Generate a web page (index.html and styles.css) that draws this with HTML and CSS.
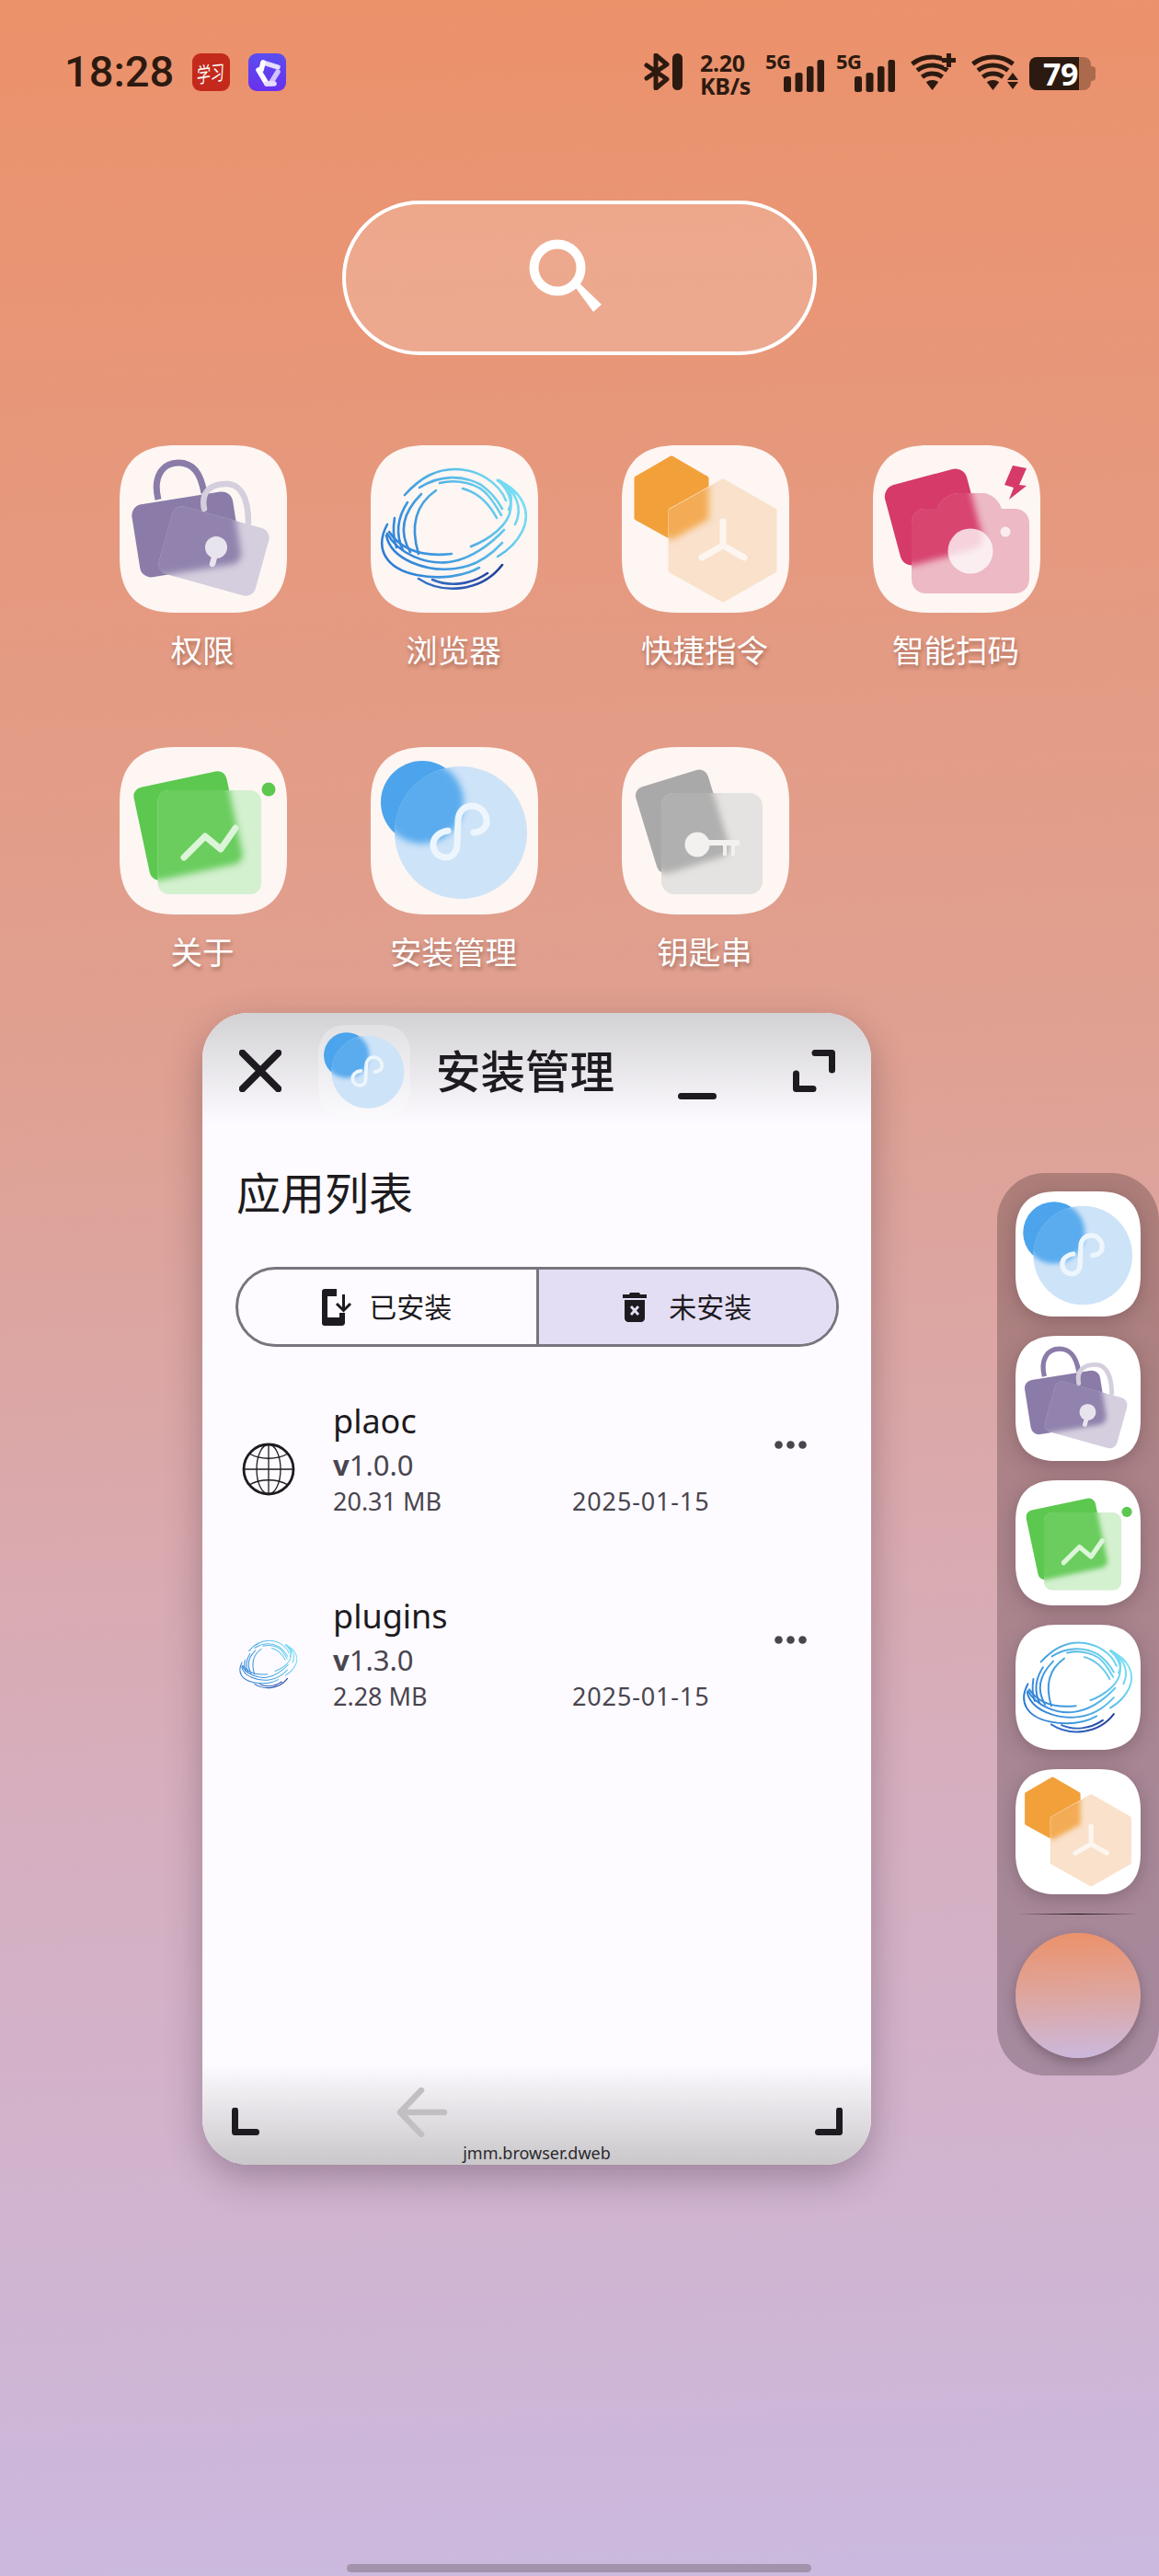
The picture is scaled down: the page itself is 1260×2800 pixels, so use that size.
FILE: index.html
```html
<!DOCTYPE html>
<html lang="zh-CN">
<head>
<meta charset="utf-8">
<title>安装管理</title>
<link rel="stylesheet" href="styles.css">
</head>
<body>
<svg class="defs" aria-hidden="true">
  <defs>
    <filter id="glass" x="-30%" y="-30%" width="160%" height="160%"><feGaussianBlur stdDeviation="3.6"/></filter>
    <linearGradient id="swirl" gradientUnits="userSpaceOnUse" x1="20" y1="130" x2="160" y2="50">
      <stop offset="0" stop-color="#2b7ad6"/><stop offset=".55" stop-color="#4fb0e4"/><stop offset="1" stop-color="#78e0f4"/>
    </linearGradient>
    <linearGradient id="navy" gradientUnits="userSpaceOnUse" x1="50" y1="150" x2="145" y2="135">
      <stop offset="0" stop-color="#3a78cc"/><stop offset="1" stop-color="#203c9c"/>
    </linearGradient>
    <path id="tile" d="M60 0H122C162 0 182 20 182 60V122C182 162 162 182 122 182H60C20 182 0 162 0 122V60C0 20 20 0 60 0Z"/>

    <rect id="lock-back" x="17" y="57" width="111" height="80" rx="12" transform="rotate(-9 72 96)"/>
    <rect id="lock-front" x="48" y="77" width="109" height="76" rx="11" transform="rotate(15.5 102.5 115)"/>
    <clipPath id="clip-lock"><use href="#lock-front"/></clipPath>

    <path id="hex-back" d="M54 14L92 36V79L54 100L16 79V36Z" stroke-width="5" stroke-linejoin="round"/>
    <path id="hex-front" d="M110 39L166 71V136L110 168L53 136V71Z" stroke-width="5" stroke-linejoin="round"/>
    <clipPath id="clip-hex"><path d="M110 37L168 70V137L110 170L51 137V70Z"/></clipPath>

    <rect id="cam-back" x="20" y="33" width="92" height="90" rx="13" transform="rotate(-15 66 78)"/>
    <path id="cam-front" d="M56 69H70C74 58 84 52 94 52H119C129 52 137 60 140 69H154C164 69 170 76 170 85V145C170 155 163 161 154 161H58C49 161 42 155 42 145V85C42 76 48 69 56 69Z"/>
    <clipPath id="clip-cam"><use href="#cam-front"/></clipPath>

    <rect id="ab-back" x="23" y="34" width="103" height="103" rx="10" transform="rotate(-12 74 85)"/>
    <rect id="ab-front" x="41.500" y="47" width="112.500" height="113" rx="12"/>
    <clipPath id="clip-ab"><use href="#ab-front"/></clipPath>

    <circle id="jm-back" cx="56" cy="60" r="45"/>
    <circle id="jm-front" cx="98" cy="93" r="72"/>
    <clipPath id="clip-jm"><use href="#jm-front"/></clipPath>

    <rect id="key-back" x="25" y="32" width="82" height="98" rx="10" transform="rotate(-17 66 81)"/>
    <rect id="key-front" x="43" y="50" width="110" height="110" rx="14"/>
    <clipPath id="clip-key"><use href="#key-front"/></clipPath>

    <g id="swirl-lines" fill="none" stroke="url(#swirl)" stroke-width="2.600" stroke-linecap="round">
      <path d="M71 49Q38 72 52 118"/>
      <path d="M55 53Q24 84 43 116"/>
      <path d="M40 62Q23 88 35 114"/>
      <path d="M26 79Q23 97 28 111"/>
      <path d="M18 86C4 112 16 134 50 141C75 146 100 143 118 133"/>
      <path d="M17 98C22 124 60 138 92 134C112 132 130 120 143 106"/>
      <path d="M18 96C30 118 60 130 85 127C108 124 130 108 145 92"/>
      <path d="M20 94C32 112 52 122 88 118"/>
      <path d="M37 54C55 34 72 26 92 26C118 26 140 42 147 60"/>
      <path d="M53 46C75 32 100 32 120 43C130 50 138 60 143 69"/>
      <path d="M75 41C95 36 118 42 128 55C134 62 138 69 142 76"/>
      <path d="M100 47C115 51 128 62 137 79"/>
      <path d="M138 38C165 50 175 72 165 93C159 105 150 114 138 121"/>
      <path d="M138 38C158 48 166 68 157 86"/>
      <path d="M140 38C152 46 156 58 150 70"/>
      <path d="M109 110C130 102 150 86 152 70C154 58 148 46 138 38"/>
      <path d="M52 145C78 162 120 160 143 130" stroke="url(#navy)"/>
      <path d="M67 146C85 154 108 152 127 139" stroke="url(#navy)"/>
    </g>

    <symbol id="i-lock" viewBox="0 0 182 182">
      <use href="#tile" class="tile-bg"/>
      <path d="M42 59C36 35 46 19 64 19C80 19 88 30 92 52" fill="none" stroke="#8a7ba8" stroke-width="7"/>
      <use href="#lock-back" fill="#8a7ba8"/>
      <use href="#lock-front" fill="#d5cede"/>
      <g clip-path="url(#clip-lock)">
        <g filter="url(#glass)" opacity=".9"><use href="#lock-back" fill="#8a7ba8"/></g>
      </g>
      <path d="M92 69C88 50 100 41 118 42C132 43 140 58 140 84" fill="none" stroke="#d4cedd" stroke-width="6.500" stroke-linecap="round"/>
      <circle cx="105" cy="111" r="12" fill="#e8e4ee"/>
      <path d="M104 118L101 129" stroke="#e8e4ee" stroke-width="6.500" stroke-linecap="round"/>
    </symbol>

    <symbol id="i-swirl" viewBox="0 0 182 182">
      <use href="#tile" class="tile-bg"/>
      <use href="#swirl-lines"/>
    </symbol>
    <symbol id="i-swirl-bare" viewBox="0 0 182 182">
      <use href="#swirl-lines"/>
    </symbol>

    <symbol id="i-hex" viewBox="0 0 182 182">
      <use href="#tile" class="tile-bg"/>
      <use href="#hex-back" fill="#f2a03a" stroke="#f2a03a"/>
      <use href="#hex-front" fill="#f9e1cb" stroke="#f9e1cb"/>
      <g clip-path="url(#clip-hex)">
        <g filter="url(#glass)" opacity=".82"><use href="#hex-back" fill="#f2a03a" stroke="#f2a03a"/></g>
      </g>
      <path d="M110 83V109M110 109L87 122M110 109L133 122" fill="none" stroke="#fdf6f0" stroke-width="7" stroke-linecap="round"/>
    </symbol>

    <symbol id="i-cam" viewBox="0 0 182 182">
      <use href="#tile" class="tile-bg"/>
      <path d="M152 22L167 25L159 43L167 44L148 59L153 46L143 43Z" fill="#d63a68"/>
      <use href="#cam-back" fill="#d63a68"/>
      <use href="#cam-front" fill="#ecb9c5"/>
      <g clip-path="url(#clip-cam)">
        <g filter="url(#glass)" opacity=".92"><use href="#cam-back" fill="#d63a68"/></g>
      </g>
      <circle cx="106" cy="115" r="24.500" fill="#fff" fill-opacity=".76"/>
      <circle cx="144" cy="94" r="5.500" fill="#fff" fill-opacity=".75"/>
    </symbol>

    <symbol id="i-about" viewBox="0 0 182 182">
      <use href="#tile" class="tile-bg"/>
      <circle cx="162" cy="46" r="7.500" fill="#5cc84f"/>
      <use href="#ab-back" fill="#5cc84f"/>
      <use href="#ab-front" fill="#d3f0cf"/>
      <g clip-path="url(#clip-ab)">
        <g filter="url(#glass)" opacity=".88"><use href="#ab-back" fill="#5cc84f"/></g>
      </g>
      <path d="M70 120L93 97L110 111L126 88" fill="none" stroke="#dcf5d8" stroke-width="7" stroke-linecap="round" stroke-linejoin="round"/>
    </symbol>

    <symbol id="i-jmm" viewBox="0 0 182 182">
      <use href="#tile" class="tile-bg"/>
      <use href="#jm-back" fill="#4ba4ec"/>
      <use href="#jm-front" fill="#cde3f8"/>
      <g clip-path="url(#clip-jm)">
        <g filter="url(#glass)" opacity=".88"><use href="#jm-back" fill="#4ba4ec"/></g>
      </g>
      <path d="M112 93C122 92 127 86 126 79C125 70 118 64 110 64C101 64 95 71 95 80L94 105C94 114 89 120 82 120C74 120 68 114 68 106C68 98 75 92 84 91" fill="none" stroke="#eef6fd" stroke-width="7" stroke-linecap="round"/>
    </symbol>

    <symbol id="i-key" viewBox="0 0 182 182">
      <use href="#tile" class="tile-bg"/>
      <use href="#key-back" fill="#a9a9a9"/>
      <use href="#key-front" fill="#e5e3e1"/>
      <g clip-path="url(#clip-key)">
        <g filter="url(#glass)" opacity=".88"><use href="#key-back" fill="#a9a9a9"/></g>
      </g>
      <circle cx="82" cy="106" r="13.500" fill="#f3f1ef"/>
      <path d="M90 101H128V107H123V118H119V107H114V118H110V107H90Z" fill="#f3f1ef"/>
    </symbol>
  </defs>
</svg>

<div class="screen">
  <header class="status">
    <div class="status-left">
      <span class="time">18:28</span>
      <span class="badge badge-red"><span class="badge-text">学习</span></span>
      <span class="badge badge-purple">
        <svg viewBox="0 0 41 41" width="41" height="41"><g fill="none" stroke-width="5.500" stroke-linecap="round"><path d="M16 10L32 15" stroke="#e6ddff"/><path d="M11 18L20 33" stroke="#fff"/><path d="M32 20L24 33" stroke="#cfc2ff"/><path d="M16 10L14 18" stroke="#fff"/><path d="M20 33L28 33" stroke="#e6ddff"/></g></svg>
      </span>
    </div>
    <div class="status-right">
      <svg class="st-bt" viewBox="0 0 42 40" width="42" height="40"><path d="M3 13L25 28L13 38V2L25 12L3 27" fill="none" stroke="#2c1a10" stroke-width="5" stroke-linejoin="round" stroke-linecap="round"/><rect x="31" y="0" width="11" height="40" rx="5.500" fill="#2c1a10"/></svg>
      <div class="speed"><span>2.20</span><span>KB/s</span></div>
      <div class="signal">
        <span class="five-g">5G</span>
        <svg viewBox="0 0 44 35" width="44" height="35"><rect x="0" y="18" width="8" height="17" rx="2.500"/><rect x="12.500" y="14" width="8" height="21" rx="2.500"/><rect x="25" y="7" width="7.500" height="28" rx="2.500"/><rect x="36.500" y="0" width="7.500" height="35" rx="2.500"/></svg>
      </div>
      <div class="signal">
        <span class="five-g">5G</span>
        <svg viewBox="0 0 44 35" width="44" height="35"><rect x="0" y="18" width="8" height="17" rx="2.500"/><rect x="12.500" y="14" width="8" height="21" rx="2.500"/><rect x="25" y="7" width="7.500" height="28" rx="2.500"/><rect x="36.500" y="0" width="7.500" height="35" rx="2.500"/></svg>
      </div>
      <svg class="wifi" viewBox="0 0 50 40" width="50" height="40">
        <g fill="none" stroke="#2c1a10" stroke-width="5"><path d="M1.600 11.500A36 36 0 0 1 45.400 11.500"/><path d="M7.100 18.600A27 27 0 0 1 39.900 18.600"/><path d="M12.500 25.700A18 18 0 0 1 34.500 25.700"/></g>
        <path d="M23.500 40L16.800 31.300A11 11 0 0 1 30.200 31.300Z" fill="#2c1a10"/>
        <path d="M41.500 0V15M34 7.500H49" stroke="#ec9169" stroke-width="10"/>
        <path d="M41.500 0V15M34 7.500H49" stroke="#2c1a10" stroke-width="5"/>
      </svg>
      <svg class="wifi" viewBox="0 0 51 40" width="51" height="40">
        <g fill="none" stroke="#2c1a10" stroke-width="5"><path d="M1.600 11.500A36 36 0 0 1 45.400 11.500"/><path d="M7.100 18.600A27 27 0 0 1 39.900 18.600"/><path d="M12.500 25.700A18 18 0 0 1 34.500 25.700"/></g>
        <path d="M23.500 40L16.800 31.300A11 11 0 0 1 30.200 31.300Z" fill="#2c1a10"/>
        <path d="M45 21L51 29H39ZM45 39L39 31H51Z" fill="#2c1a10"/>
      </svg>
      <div class="battery"><span>79</span></div>
    </div>
  </header>

  <div class="search">
    <svg viewBox="0 0 90 90" width="90" height="90"><circle cx="33" cy="33" r="25.500" fill="none" stroke="#fff" stroke-width="10"/><path d="M50 51L55 48L81 73L72 81Z" fill="#fff"/></svg>
  </div>

  <main class="apps">
    <div class="app"><svg class="tile"><use href="#i-lock"/></svg><span class="app-name">权限</span></div>
    <div class="app"><svg class="tile"><use href="#i-swirl"/></svg><span class="app-name">浏览器</span></div>
    <div class="app"><svg class="tile"><use href="#i-hex"/></svg><span class="app-name">快捷指令</span></div>
    <div class="app"><svg class="tile"><use href="#i-cam"/></svg><span class="app-name">智能扫码</span></div>
    <div class="app"><svg class="tile"><use href="#i-about"/></svg><span class="app-name">关于</span></div>
    <div class="app"><svg class="tile"><use href="#i-jmm"/></svg><span class="app-name">安装管理</span></div>
    <div class="app"><svg class="tile"><use href="#i-key"/></svg><span class="app-name">钥匙串</span></div>
  </main>

  <section class="window">
    <div class="win-head">
      <svg class="w-close" viewBox="0 0 46 46" width="46" height="46"><path d="M3.500 3.500L42.500 42.500M42.500 3.500L3.500 42.500" stroke="#1d1b20" stroke-width="7.500" stroke-linecap="round"/></svg>
      <svg class="w-icon"><use href="#i-jmm"/></svg>
      <span class="w-title">安装管理</span>
      <svg class="w-min" viewBox="0 0 42 63" width="42" height="63"><rect x="0" y="56" width="42" height="7" rx="3.500" fill="#1d1b20"/></svg>
      <svg class="w-max" viewBox="0 0 46 46" width="46" height="46"><path d="M24 3.500H42.500V22M3.500 26V42.500H22" fill="none" stroke="#1d1b20" stroke-width="7" stroke-linecap="round" stroke-linejoin="round"/></svg>
    </div>
    <div class="win-body">
      <h1 class="page-title">应用列表</h1>
      <div class="segments">
        <div class="segment">
          <svg viewBox="0 0 33 40" width="33" height="40"><path d="M3 0H16V8H6V31H19V26H25V37C25 39 23 40 22 40H3C1 40 0 39 0 37V3C0 1 1 0 3 0Z" fill="#1d1b20"/><path d="M23.500 6V23M16 16L23.500 23.500L31 16" fill="none" stroke="#1d1b20" stroke-width="3"/></svg>
          <span class="segment-label">已安装</span>
        </div>
        <div class="segment segment-on">
          <svg viewBox="0 0 26 32" width="26" height="32"><path d="M8 0H18L19 2H26V6H0V2H7ZM2 8H24V28C24 30 22 32 20 32H6C4 32 2 30 2 28Z" fill="#1d1b20"/><path d="M9 15L17 24M17 15L9 24" stroke="#e4def5" stroke-width="2.800"/></svg>
          <span class="segment-label">未安装</span>
        </div>
      </div>

      <article class="row">
        <div class="row-icon">
          <svg class="globe" viewBox="0 0 58 58" width="58" height="58"><g fill="none" stroke="#1d1b20"><circle cx="29" cy="29" r="27" stroke-width="2.800"/><path d="M29 2V56M2 29H56" stroke-width="1.300"/><ellipse cx="29" cy="29" rx="13" ry="27" stroke-width="1.300"/><path d="M8 12C20 19 38 19 50 12M8 46C20 39 38 39 50 46" stroke-width="1.300"/></g></svg>
        </div>
        <div class="row-text">
          <div class="name">plaoc</div>
          <div class="version"><b>v</b>1.0.0</div>
          <div class="meta"><span class="size">20.31 MB</span><span class="date">2025-01-15</span></div>
        </div>
        <svg class="dots" viewBox="0 0 35 9" width="35" height="9"><circle cx="4.500" cy="4.500" r="4.300"/><circle cx="17.500" cy="4.500" r="4.300"/><circle cx="30.500" cy="4.500" r="4.300"/></svg>
      </article>

      <article class="row">
        <div class="row-icon">
          <svg class="swirl-small"><use href="#i-swirl-bare"/></svg>
        </div>
        <div class="row-text">
          <div class="name">plugins</div>
          <div class="version"><b>v</b>1.3.0</div>
          <div class="meta"><span class="size">2.28 MB</span><span class="date">2025-01-15</span></div>
        </div>
        <svg class="dots" viewBox="0 0 35 9" width="35" height="9"><circle cx="4.500" cy="4.500" r="4.300"/><circle cx="17.500" cy="4.500" r="4.300"/><circle cx="30.500" cy="4.500" r="4.300"/></svg>
      </article>
    </div>
    <div class="win-foot">
      <svg class="f-left" viewBox="0 0 30 30" width="30" height="30"><path d="M3.500 3V26.500H26.500" fill="none" stroke="#1d1b20" stroke-width="7" stroke-linecap="round" stroke-linejoin="round"/></svg>
      <svg class="f-back" viewBox="0 0 56 54" width="56" height="54"><path d="M27 3L4 27L27 51M4 27H52" fill="none" stroke="#c1bfc2" stroke-width="6.500" stroke-linecap="round" stroke-linejoin="round"/></svg>
      <svg class="f-right" viewBox="0 0 30 30" width="30" height="30"><path d="M26.500 3V26.500H3.500" fill="none" stroke="#1d1b20" stroke-width="7" stroke-linecap="round" stroke-linejoin="round"/></svg>
      <span class="f-domain">jmm.browser.dweb</span>
    </div>
  </section>

  <aside class="dock">
    <svg class="dock-tile"><use href="#i-jmm"/></svg>
    <svg class="dock-tile"><use href="#i-lock"/></svg>
    <svg class="dock-tile"><use href="#i-about"/></svg>
    <svg class="dock-tile"><use href="#i-swirl"/></svg>
    <svg class="dock-tile"><use href="#i-hex"/></svg>
    <div class="dock-line"></div>
    <div class="dock-circle"></div>
  </aside>

  <div class="home-bar"></div>
</div>
</body>
</html>
```

FILE: styles.css
```css
* { box-sizing: border-box; }
html, body { margin: 0; padding: 0; }
body {
  width: 1260px;
  height: 2800px;
  overflow: hidden;
  font-family: "Noto Sans", "Noto Sans CJK SC", sans-serif;
}
.defs { position: absolute; width: 0; height: 0; overflow: hidden; }
.tile-bg { fill: var(--tile, #fdf6f3); }

.screen {
  position: relative;
  width: 1260px;
  height: 2800px;
  overflow: hidden;
  background: linear-gradient(178deg, #ec916a 0%, #dfa193 42%, #d6afc0 70%, #cbb9df 100%);
}

/* status bar */
.status {
  display: flex;
  justify-content: space-between;
  align-items: flex-start;
  padding: 56px 74px 0 70px;
  height: 118px;
  color: #2c1a10;
}
.status-left { display: flex; align-items: center; height: 44px; }
.time {
  font: 500 47px/44px Roboto, sans-serif;
  width: 139px;
}
.badge {
  width: 41px;
  height: 41px;
  border-radius: 9px;
  display: flex;
  align-items: center;
  justify-content: center;
  overflow: hidden;
}
.badge-red { background: #c42a1c; margin-right: 20px; }
.badge-purple { background: linear-gradient(#5a4ef0, #6a30ee); }
.badge-text {
  color: #fff;
  font: 400 15px/15px "Noto Sans CJK SC", sans-serif;
  white-space: nowrap;
  transform: rotate(-8deg) skewX(-10deg) scaleY(1.5);
}
.status-right { display: flex; align-items: flex-start; }
.st-bt { margin-top: 2px; margin-right: 19px; }
.speed {
  display: flex;
  flex-direction: column;
  font: 700 25px/25px "Noto Sans", sans-serif;
  width: 54px;
  margin-right: 17px;
  letter-spacing: -.3px;
}
.signal {
  position: relative;
  width: 64px;
  height: 44px;
  margin-right: 13px;
  fill: #2c1a10;
}
.signal svg { position: absolute; right: 0; top: 9px; }
.five-g {
  position: absolute;
  left: 0;
  top: -3px;
  font: 700 22px/26px "Noto Sans", sans-serif;
  letter-spacing: -.6px;
}
.wifi { margin-top: 2px; margin-left: 4px; margin-right: 12px; }
.battery {
  position: relative;
  width: 67px;
  height: 36px;
  margin-top: 6px;
  border-radius: 8px;
  background: linear-gradient(90deg, #2c1a10 54px, #ac6a4d 54px);
  color: #fff;
  font: 700 34px/36px "Noto Sans", sans-serif;
  letter-spacing: -.5px;
  padding-left: 15px;
}
.battery::after {
  content: "";
  position: absolute;
  left: 67px;
  top: 10px;
  width: 5px;
  height: 16px;
  border-radius: 0 4px 4px 0;
  background: #ac6a4d;
}

/* search */
.search {
  width: 516px;
  height: 168px;
  margin: 100px 0 0 372px;
  border: 4px solid #fff;
  border-radius: 84px;
  background: rgba(255, 255, 255, .18);
  display: flex;
  align-items: center;
  justify-content: center;
  padding: 0 28px 6px 0;
}
.search svg { margin-top: 8px; margin-left: 4px; }

/* app grid */
.apps {
  display: grid;
  grid-template-columns: repeat(4, 182px);
  column-gap: 91px;
  row-gap: 84px;
  padding: 98px 0 0 130px;
}
.app {
  display: flex;
  flex-direction: column;
  align-items: center;
  gap: 16px;
}
.tile { width: 182px; height: 182px; display: block; }
.app-name {
  color: #fff;
  font: 400 34.500px/46px "Noto Sans CJK SC", sans-serif;
  text-shadow: 1px 3px 4px rgba(70, 40, 30, .4);
  white-space: nowrap;
  margin-left: -2px;
}

/* floating window */
.window {
  position: absolute;
  left: 220px;
  top: 1101px;
  width: 727px;
  height: 1252px;
  border-radius: 50px;
  background: #fdfbff;
  box-shadow: 0 14px 40px rgba(50, 30, 50, .32);
  overflow: hidden;
  display: flex;
  flex-direction: column;
  color: #1d1b20;
}
.win-head {
  --tile: rgba(255, 255, 255, .28);
  height: 125px;
  flex: none;
  display: flex;
  align-items: center;
  padding-left: 40px;
  background: linear-gradient(#d2d1d4, #fdfbff 97%);
}
.w-close { margin-right: 40px; }
.w-icon { width: 100px; height: 100px; margin-right: 28px; }
.w-title {
  font: 500 48.500px/56px "Noto Sans CJK SC", sans-serif;
  width: 193px;
  white-space: nowrap;
  margin: -4px 70px 0 0;
}
.w-min { margin-right: 83px; }
.win-body { flex: 1; padding: 0 35px 0 36px; }
.page-title {
  margin: 40px 0 55px 1px;
  font: 400 48px/56px "Noto Sans CJK SC", sans-serif;
}
.segments {
  display: flex;
  height: 87px;
  border: 3px solid #79747e;
  border-radius: 44px;
  overflow: hidden;
}
.segment {
  flex: 1;
  display: flex;
  align-items: center;
  justify-content: center;
  gap: 18px;
  font: 400 30px/40px "Noto Sans CJK SC", sans-serif;
}
.segment-label { margin-top: -3px; }
.segment-on {
  background: #e4def5;
  border-left: 3px solid #79747e;
  gap: 24px;
}
.row {
  display: flex;
  align-items: flex-start;
  height: 212px;
  padding-top: 55px;
}
.row-icon {
  width: 71px;
  margin-right: 35px;
  flex: none;
  display: flex;
  justify-content: center;
}
.globe { margin-top: 49px; }
.swirl-small { width: 72px; height: 72px; margin-top: 42px; flex: none; }
.row-text { flex: 1; color: #49454f; }
.name {
  font: 400 36px/52px "Noto Sans", sans-serif;
  color: #1d1b20;
}
.version { font: 400 31px/42px "Noto Sans", sans-serif; }
.meta { font: 400 27px/38px "Noto Sans", sans-serif; display: flex; }
.size { width: 260px; }
.date { letter-spacing: .85px; }
.dots { fill: #49454f; margin: 47px 35px 0 0; flex: none; }

.win-foot {
  position: relative;
  height: 110px;
  flex: none;
  background: linear-gradient(#fdfbff, #c9c7ca);
}
.f-left { position: absolute; left: 32px; top: 48px; }
.f-right { position: absolute; left: 666px; top: 48px; }
.f-back { position: absolute; left: 211px; top: 26px; }
.f-domain {
  position: absolute;
  left: 0;
  right: 0;
  top: 86px;
  text-align: center;
  font: 400 18px/22px "Noto Sans", sans-serif;
  color: #2a2a2e;
}

/* dock */
.dock {
  --tile: #fff;
  position: absolute;
  left: 1084px;
  top: 1275px;
  width: 176px;
  height: 981px;
  border-radius: 52px;
  background: rgba(30, 15, 25, .25);
  padding: 20px;
  display: flex;
  flex-direction: column;
  gap: 21px;
}
.dock-tile {
  width: 136px;
  height: 136px;
  flex: none;
  filter: drop-shadow(0 5px 10px rgba(40, 20, 30, .25));
}
.dock-line {
  height: 1px;
  flex: none;
  margin-bottom: -1px;
  background: linear-gradient(90deg, transparent, #1a1014 50%, transparent);
}
.dock-circle {
  width: 136px;
  height: 136px;
  flex: none;
  border-radius: 50%;
  background: linear-gradient(178deg, #ec9169, #dfa49a 45%, #cbb9df);
  box-shadow: 0 5px 14px rgba(40, 20, 30, .3);
}

.home-bar {
  position: absolute;
  left: 377px;
  top: 2787px;
  width: 505px;
  height: 9px;
  border-radius: 5px;
  background: #a292ab;
}
```
